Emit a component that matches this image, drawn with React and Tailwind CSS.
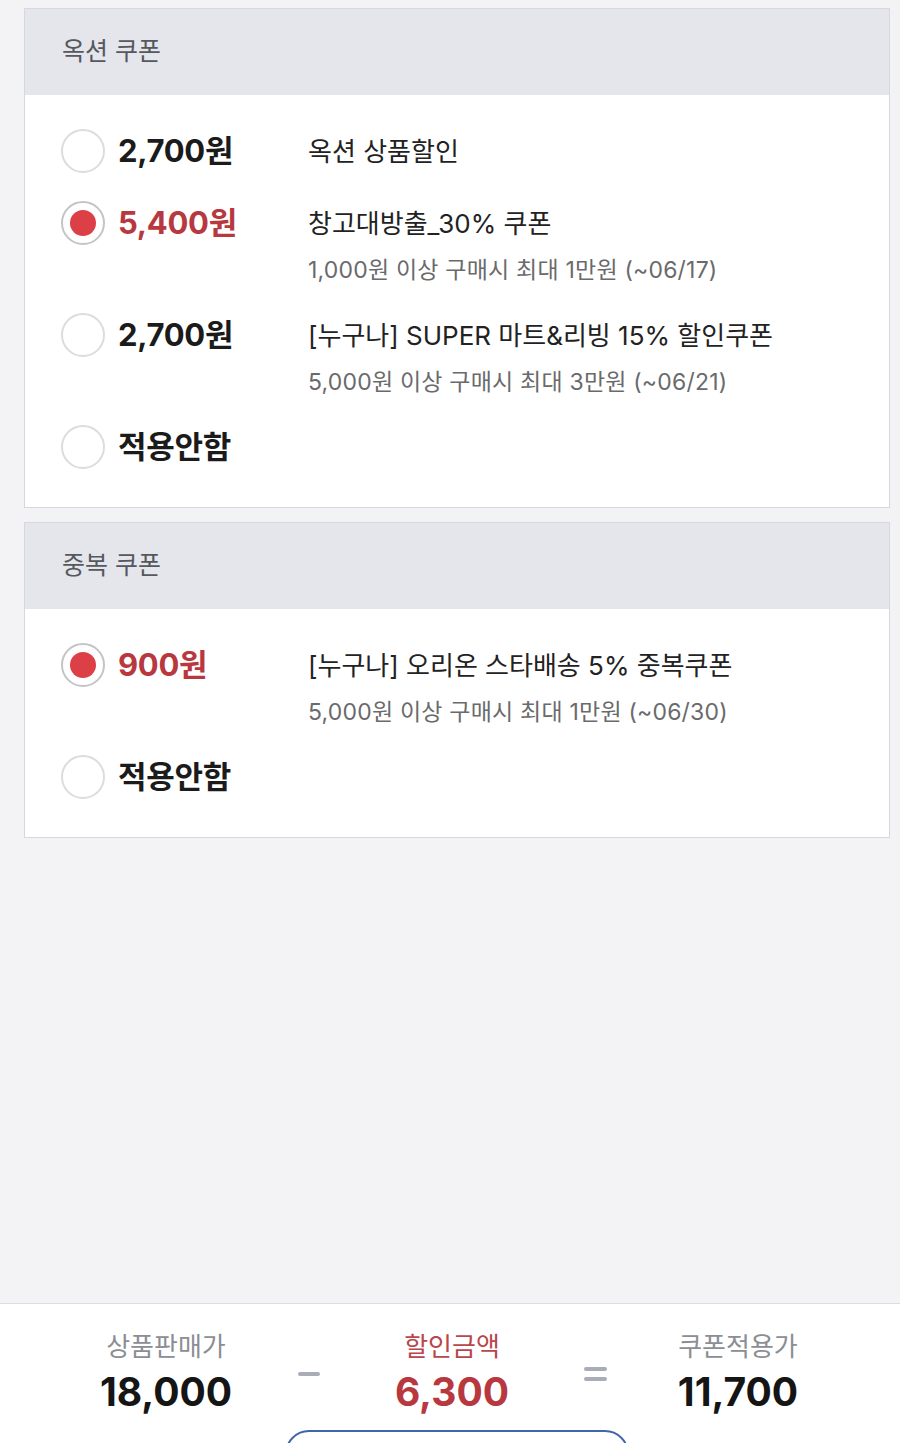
import React from 'react';

const auctionCoupons = [
  { id: 1, amount: '2,700원', title: '옥션 상품할인' },
  { id: 2, amount: '5,400원', title: '창고대방출_30% 쿠폰', sub: '1,000원 이상 구매시 최대 1만원 (~06/17)', checked: true },
  { id: 3, amount: '2,700원', title: '[누구나] SUPER 마트&리빙 15% 할인쿠폰', sub: '5,000원 이상 구매시 최대 3만원 (~06/21)' },
  { id: 4, amount: '적용안함' },
];

const dupCoupons = [
  { id: 1, amount: '900원', title: '[누구나] 오리온 스타배송 5% 중복쿠폰', sub: '5,000원 이상 구매시 최대 1만원 (~06/30)', checked: true },
  { id: 2, amount: '적용안함' },
];

function Radio({ checked }) {
  return (
    <span
      className={`flex items-center justify-center w-[44px] h-[44px] rounded-full border-2 bg-white ${
        checked ? 'border-[#c4c4c6]' : 'border-[#dcdcde]'
      }`}
    >
      {checked && <span className="w-[26px] h-[26px] rounded-full bg-[#dc3f46]" />}
    </span>
  );
}

function CouponRow({ coupon }) {
  const { amount, title, sub, checked } = coupon;
  return (
    <div className="flex items-start">
      <div className="flex items-center h-[44px] w-[247px] shrink-0">
        <Radio checked={checked} />
        <span
          className={`ml-[13px] text-[31px] font-bold tracking-[-0.3px] ${
            checked ? 'text-[#b8383f]' : 'text-[#1b1b1b]'
          }`}
        >
          {amount}
        </span>
      </div>
      {title && (
        <div className="flex flex-col min-w-0">
          <div className="h-[44px] flex items-center">
            <span className="whitespace-nowrap text-[26px] text-[#222]">{title}</span>
          </div>
          {sub && (
            <div className="mt-[10px] h-[30px] flex items-center text-[23px] text-[#6a6a6c] tracking-[0.2px]">{sub}</div>
          )}
        </div>
      )}
    </div>
  );
}

function CouponCard({ label, coupons }) {
  return (
    <section className="ml-[24px] mr-[10px] border border-[#d6d8dd] bg-white">
      <div className="h-[86px] bg-[#e5e6eb] flex items-center pl-[37px] text-[25px] text-[#55585e]">
        {label}
      </div>
      <div className="flex flex-col gap-[28px] pt-[34px] pb-[38px] pl-[36px]">
        {coupons.map((c) => (
          <CouponRow key={c.id} coupon={c} />
        ))}
      </div>
    </section>
  );
}

function Summary({ label, value, red }) {
  return (
    <div className="w-[200px] flex flex-col items-center">
      <span className={`text-[26px] leading-[32px] ${red ? 'text-[#b9464c]' : 'text-[#8b8e94]'}`}>{label}</span>
      <span
        className={`mt-[5px] text-[39px] leading-[48px] font-bold ${red ? 'text-[#b8383f]' : 'text-[#151515]'}`}
      >
        {value}
      </span>
    </div>
  );
}

export default function App() {
  return (
    <div className="h-[1443px] w-[900px] overflow-hidden flex flex-col bg-[#f3f3f5] font-['Inter','Noto_Sans_CJK_KR',sans-serif]">
      <div className="pt-[8px] flex flex-col gap-[14px]">
        <CouponCard label="옥션 쿠폰" coupons={auctionCoupons} />
        <CouponCard label="중복 쿠폰" coupons={dupCoupons} />
      </div>

      <div className="flex-1" />

      {/* Price summary */}
      <div className="h-[140px] shrink-0 bg-white border-t border-[#dcdde1] overflow-hidden">
        <div className="flex justify-center pt-[27px] pl-[4px]">
          <Summary label="상품판매가" value="18,000" />
          <div className="w-[86px] flex justify-center pt-[41px]">
            <span className="w-[22px] h-[4px] bg-[#a9adb6] rounded-sm" />
          </div>
          <Summary label="할인금액" value="6,300" red />
          <div className="w-[86px] flex flex-col items-center pt-[36px] gap-[6px]">
            <span className="w-[23px] h-[4px] bg-[#a9adb6] rounded-sm" />
            <span className="w-[23px] h-[4px] bg-[#a9adb6] rounded-sm" />
          </div>
          <Summary label="쿠폰적용가" value="11,700" />
        </div>
        <button className="mt-[14px] ml-[285px] w-[344px] h-[64px] rounded-[24px] border-2 border-[#3f66aa] bg-white" />
      </div>
    </div>
  );
}
